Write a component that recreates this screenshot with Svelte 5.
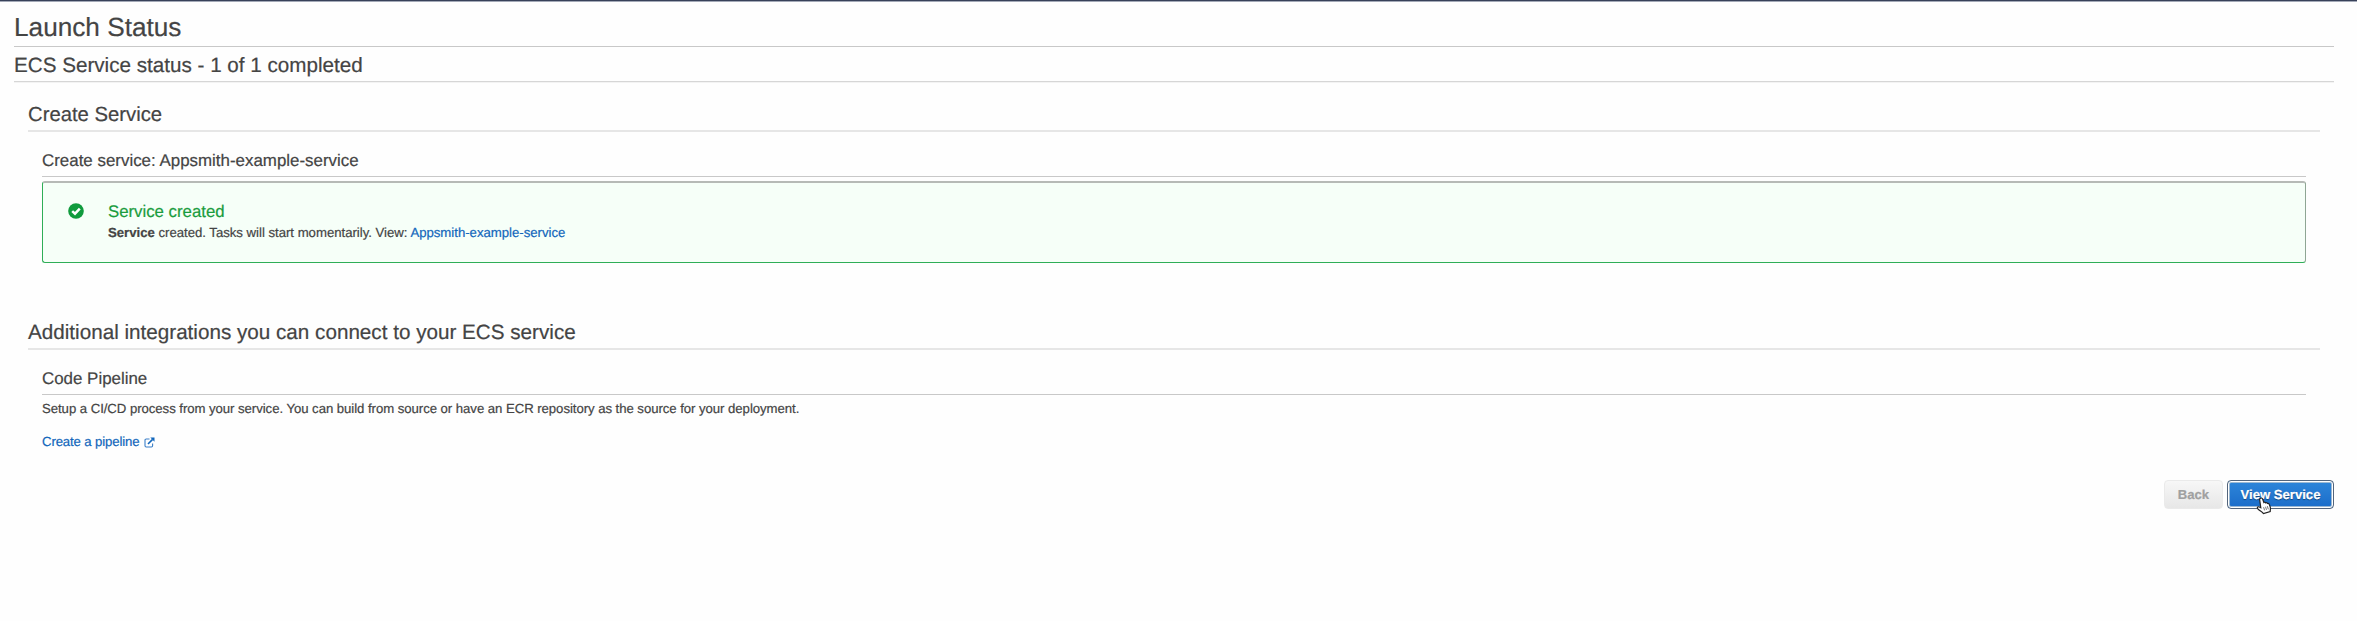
<script>
  const service = 'Appsmith-example-service';
</script>

<main>
  <h1>Launch Status</h1>
  <h2>ECS Service status - 1 of 1 completed</h2>

  <section>
    <h3>Create Service</h3>
    <div class="group">
      <h4>Create service: {service}</h4>
      <div class="alert">
        <svg class="check" viewBox="0 0 16 16" width="16" height="16">
          <circle cx="8" cy="8" r="7.8" fill="#109b3d" />
          <path d="M4.2 8.1 7 10.7 11.8 5.7" fill="none" stroke="#fff" stroke-width="2.5" />
        </svg>
        <div>
          <div class="alert-title">Service created</div>
          <div class="alert-text"><b>Service</b> created. Tasks will start momentarily. View: <a href="#service">{service}</a></div>
        </div>
      </div>
    </div>
  </section>

  <section class="extra">
    <h3 class="wide">Additional integrations you can connect to your ECS service</h3>
    <div class="group">
      <h4>Code Pipeline</h4>
      <p>Setup a CI/CD process from your service. You can build from source or have an ECR repository as the source for your deployment.</p>
      <a class="pipeline" href="#pipeline">Create a pipeline
        <svg viewBox="0 0 11 11" width="11" height="11">
          <path d="M5.5 2H2.2Q1 2 1 3.2v5.6Q1 10 2.2 10h5.2q1.2 0 1.2-1.2V6.4" fill="none" stroke="#3a7fc8" stroke-width="1.1" />
          <path d="M4 7 8.6 2.4" stroke="#1166bb" stroke-width="1.6" />
          <path d="M6.3.5h4.2v4.2z" fill="#1166bb" />
        </svg>
      </a>
    </div>
  </section>

  <footer>
    <button class="back" disabled>Back</button>
    <button class="view">View Service
      <svg class="cursor" viewBox="0 0 16 18" width="16" height="18">
        <path d="M4.6 1.2c1-.5 1.8.1 2.1 1l1.2 3.3c.7-.5 1.5-.3 1.9.4.7-.4 1.5-.1 1.8.6.9-.2 1.5.2 1.8 1.1l.9 2.7c.4 1.4-.1 2.5-.1 4.2l-6.7 2.1c-1.2-1.8-3.1-2.5-5-4.1-1.6-1.3-1.5-3 .3-2.7l2 .9L3.7 3c-.2-.8.1-1.5.9-1.8z" fill="#fff" stroke="#222" stroke-width="1.2" />
        <path d="m7.6 10.2 1 3.2m.9-3.7 1 3.2m.8-3.8 1 3.2" stroke="#666" stroke-width=".9" />
      </svg>
    </button>
  </footer>
</main>

<style>
  :global(body) { background: #fefefe; }
  main {
    box-sizing: border-box;
    height: 621px;
    padding: 1px 23px 0 14px;
    border-top: 1px solid #38415a;
    box-shadow: inset 0 1px #a3a9b7;
    font: 13.2px/18px "Liberation Sans", Arial, sans-serif;
    color: #444;
    text-rendering: geometricPrecision;
    -webkit-text-stroke: 0.2px;
  }
  h1, h2, h3, h4, p { margin: 0; font-weight: 400; }
  h1 { padding-top: 6px; font-size: 26.2px; line-height: 38px; border-bottom: 1px solid #c8c8c8; }
  h2 { padding-top: 3px; font-size: 20.65px; line-height: 31px; border-bottom: 1px solid #d6d6d6; box-shadow: 0 1px #f3f3f3; }
  section { padding: 0 14px; }
  h3 { padding-top: 18px; font-size: 20.3px; line-height: 30px; border-bottom: 2px solid #e6e6e6; }
  h3.wide { padding-top: 2px; font-size: 20.66px; }
  .group { padding: 0 14px; }
  h4 { padding-top: 14px; font-size: 16.92px; line-height: 30px; border-bottom: 1px solid #c8c8c8; }
  .alert {
    box-sizing: border-box;
    display: flex;
    gap: 24px;
    height: 82px;
    margin-top: 4px;
    padding: 17px 0 0 25px;
    border: solid;
    border-width: 2px 1px 1px 1px;
    border-color: #b6bab6 #8fa694 #2fae57 #2fae57;
    border-radius: 3px;
    background: #f6fff8;
  }
  .check { margin-top: 3px; }
  .alert-title { font-size: 16.8px; line-height: 24px; color: #1a9c3e; }
  .alert-text { letter-spacing: -0.02px; }
  a { color: #1166bb; text-decoration: none; }
  .extra { margin-top: 53px; }
  p { margin-top: 4px; line-height: 20px; letter-spacing: -0.057px; }
  .pipeline { display: flex; align-items: center; gap: 4px; height: 20px; margin-top: 13px; letter-spacing: -0.13px; }
  footer { display: flex; justify-content: flex-end; gap: 4px; margin-top: 28px; }
  button {
    position: relative;
    box-sizing: border-box;
    height: 29px;
    padding: 0;
    font: bold 13.1px/26px "Liberation Sans", Arial, sans-serif;
    border-radius: 4px;
    text-rendering: geometricPrecision;
  }
  .back { width: 59px; border: 1px solid #eaeaea; background: linear-gradient(#f7f7f7, #e7e7e7); color: #a0a0a0; }
  .view {
    width: 107px;
    border: 1px solid #53657c;
    background: linear-gradient(#2e86da, #1a6cc9);
    box-shadow: inset 0 0 0 1px #fff, inset 0 0 0 2px #9cb9d3;
    color: #fff;
    text-shadow: 0 1px 1px #124377;
  }
  .cursor { position: absolute; left: 28px; top: 16px; }
</style>
